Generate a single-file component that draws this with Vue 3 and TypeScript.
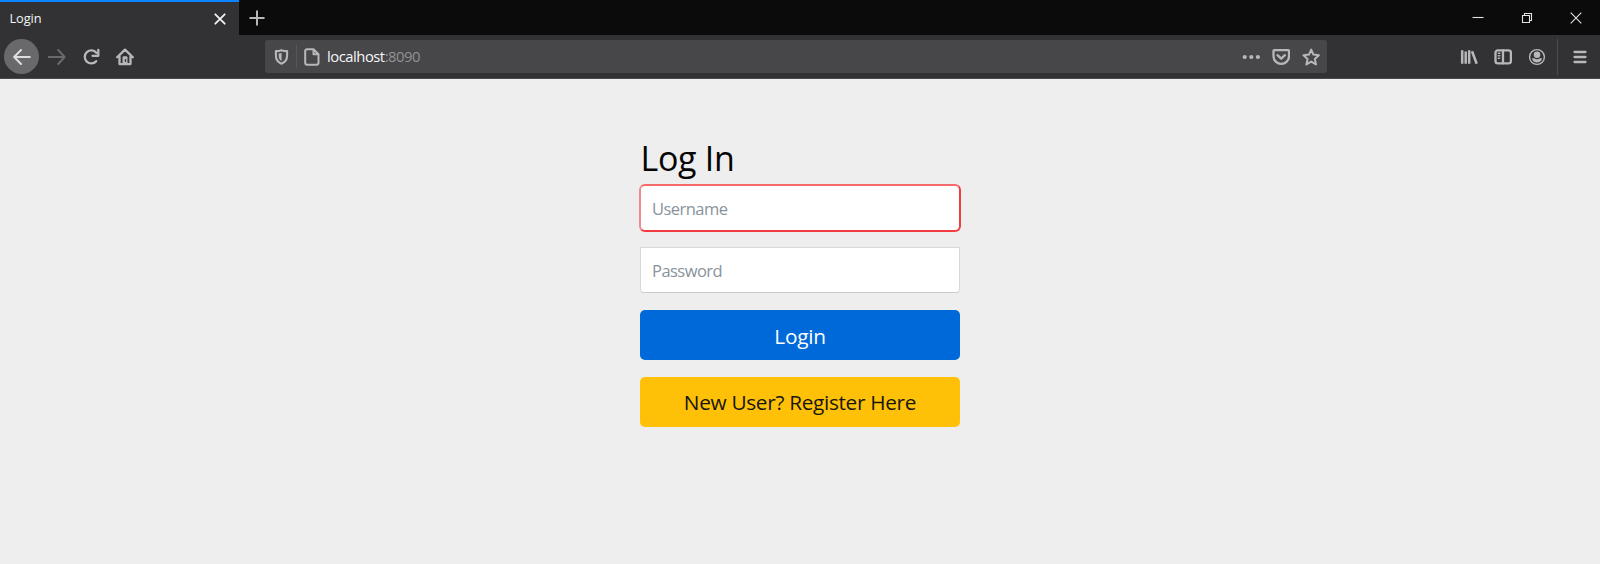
<script setup lang="ts">
import { ref } from 'vue'

const username = ref('')
const password = ref('')
const host = 'localhost'
const port = ':8090'
</script>

<template>
  <div class="window">
    <header class="tabstrip">
      <div class="tab">
        <span class="tab-title">Login</span>
        <svg class="tab-close" width="12" height="12" viewBox="0 0 12 12"><path d="M1.3 1.3 10.7 10.7M10.7 1.3 1.3 10.7" /></svg>
      </div>
      <svg class="new-tab" width="16" height="16" viewBox="0 0 16 16"><path d="M8 1.2v13.6M1.2 8h13.6" /></svg>
      <div class="controls">
        <svg width="12" height="12" viewBox="0 0 12 12"><path d="M.5 5.5h11" /></svg>
        <svg width="12" height="12" viewBox="0 0 12 12"><path d="M1.5 3.5h7v7h-7zM3.5 3.5v-2h7v7h-2" /></svg>
        <svg width="12" height="12" viewBox="0 0 12 12"><path d="M.7.7 11.3 11.3M11.3.7.7 11.3" /></svg>
      </div>
    </header>

    <nav class="toolbar">
      <div class="nav-buttons">
        <span class="back">
          <svg width="18" height="18" viewBox="0 0 18 18"><path d="M16.8 9H1.5M8 2 1.2 9 8 16" /></svg>
        </span>
        <svg class="forward" width="18" height="18" viewBox="0 0 18 18"><path d="M.8 9h15.4M10.2 2l6.4 7-6.4 7" /></svg>
        <svg class="heavy" width="18" height="18" viewBox="0 0 18 18"><path d="M14.3 4.8A6.5 6.5 0 1 0 14.2 13.2" /><path d="M16.3 2v5.8H10.5" /></svg>
        <svg class="heavy" width="18" height="18" viewBox="0 0 18 18"><path d="M1.2 9.3 9 1.6l7.8 7.7M3.5 8.6v7.5h11V8.6" /><path class="solid" d="M6.5 9.5q0-1.2 1.2-1.2h2.6q1.2 0 1.2 1.2V16h-5z" /><path class="knob" d="M9.5 11.6v1.6" /></svg>
      </div>

      <div class="urlbar">
        <svg class="shield" width="15" height="16" viewBox="0 0 15 16"><path d="M7.5 1.2c2 .7 3.7.9 5.6.9v4.4c0 4-1.7 6.7-5.6 8.2-3.9-1.5-5.6-4.2-5.6-8.2V2.1c1.9 0 3.6-.2 5.6-.9z" /><path class="solid" d="M7.6 4v8.1C5.8 11.2 4.7 9.7 4.7 6.5V4.4c1 0 2-.1 2.9-.4z" /></svg>
        <i class="url-divider"></i>
        <svg class="page" width="16" height="18" viewBox="0 0 16 18"><path d="M3.2 1.2h6.3l5 5V14.8c0 1.2-.8 2-2 2H3.2c-1.2 0-2-.8-2-2V3.2c0-1.2.8-2 2-2zM9.5 1.5v4.7h4.7" /></svg>
        <span class="address">{{ host }}<span class="port">{{ port }}</span></span>
        <div class="url-actions">
          <svg width="18" height="18" viewBox="0 0 18 18"><g class="dots"><circle cx="2.7" cy="9" r="2.1" /><circle cx="9.3" cy="9" r="2.1" /><circle cx="15.9" cy="9" r="2.1" /></g></svg>
          <svg class="heavy" width="18" height="18" viewBox="0 0 18 18"><path d="M2.5 2.1h13.5c.6 0 1 .4 1 1v5.1a7.7 7.7 0 0 1-15.5 0V3.1c0-.6.4-1 1-1z" /><path d="m5.5 7.2 3.7 3.5 3.7-3.5" /></svg>
          <svg width="18" height="18" viewBox="0 0 18 18"><path d="m9.2 1.6 2.2 5 5.5.6-4.1 3.7 1.2 5.5-4.8-2.8-4.8 2.8 1.2-5.5-4.1-3.7 5.5-.6z" /></svg>
        </div>
      </div>

      <div class="tools">
        <svg class="library" width="18" height="18" viewBox="0 0 18 18"><path d="M2.2 2.2V15.8M5.7 3.6V15.8M9.2 2.2V15.8M12 3.2 16.7 15.8" /></svg>
        <svg class="heavy" width="18" height="18" viewBox="0 0 18 18"><rect x="1.5" y="2.3" width="15.4" height="13" rx="2.4" /><path d="M9 2.3v13" /><path class="thin" d="M4.3 5.3h1.6M4.3 7.8h1.6M4.3 10.2h1.3" /></svg>
        <svg width="18" height="18" viewBox="0 0 18 18"><circle class="ring" cx="9" cy="9" r="7.4" /><circle class="solid" cx="9" cy="6.7" r="3.3" /><path class="solid" d="M3.9 10.3h2.5C7.3 11.6 10.7 11.6 11.6 10.3h2.5C13.3 13.4 11.5 14.6 9 14.6s-4.3-1.2-5.1-4.3z" /></svg>
        <i class="tool-divider"></i>
        <svg class="heavy" width="14" height="18" viewBox="0 0 14 18"><path d="M1.5 4h11M1.5 9h11M1.5 14h11" /></svg>
      </div>
    </nav>

    <main class="content">
      <form class="login" @submit.prevent>
        <h1>Log In</h1>
        <input v-model="username" class="field invalid" type="text" placeholder="Username" />
        <input v-model="password" class="field password" type="password" placeholder="Password" />
        <button class="button primary" type="submit"><span>Login</span></button>
        <button class="button register" type="button"><span>New User? Register Here</span></button>
      </form>
    </main>
  </div>
</template>

<style>
html,
body {
  margin: 0;
  background: #eee;
}
</style>

<style scoped>
* {
  box-sizing: border-box;
}
.window {
  width: 1600px;
  height: 564px;
  overflow: hidden;
  background: #eee;
  font-family: "Open Sans", "Noto Sans", sans-serif;
}
svg {
  display: block;
  flex: none;
  fill: none;
  stroke: #b8b8ba;
  stroke-width: 2;
  stroke-linejoin: round;
  stroke-linecap: round;
}
.heavy {
  stroke-width: 2.3;
}
.tabstrip {
  display: flex;
  align-items: center;
  height: 35px;
  background: #0b0b0b;
}
.tab {
  display: flex;
  align-items: center;
  justify-content: space-between;
  width: 239px;
  height: 35px;
  padding: 0 13px 0 9.5px;
  border-top: 2px solid #0a84ff;
  background: #323234;
}
.tab-title {
  padding-bottom: 2px;
  color: #f4f4f5;
  font-size: 12.8px;
  letter-spacing: -0.1px;
}
.tab-close {
  stroke: #f2f2f2;
  stroke-width: 1.8;
}
.new-tab {
  margin-left: 10px;
}
.controls {
  display: flex;
  gap: 37px;
  margin-left: auto;
  margin-right: 18px;
}
.controls svg {
  stroke: #e2e2e2;
  stroke-width: 1.1;
  stroke-linecap: butt;
  stroke-linejoin: miter;
}
.toolbar {
  display: flex;
  align-items: center;
  height: 44px;
  padding-left: 4px;
  border-bottom: 1px solid #4a4a4c;
  background: #323234;
}
.nav-buttons {
  display: flex;
  align-items: center;
  gap: 16px;
  width: 261px;
}
.back {
  display: flex;
  align-items: center;
  justify-content: center;
  width: 35px;
  height: 35px;
  margin-right: -7px;
  border-radius: 50%;
  background: #69696b;
}
.back svg {
  stroke: #dedede;
}
.forward {
  stroke: #69696b;
}
.solid {
  fill: #b8b8ba;
  stroke: none;
}
.knob {
  stroke: #323234;
  stroke-width: 1.4;
}
.urlbar {
  display: flex;
  align-items: center;
  width: 1062px;
  height: 33px;
  padding-left: 9px;
  border-radius: 3px;
  background: #474749;
}
.shield {
  stroke-width: 2.1;
}
.url-divider {
  width: 1px;
  height: 23px;
  margin: 0 7px;
  background: #57575b;
}
.page {
  stroke-width: 2;
}
.address {
  margin-left: 7px;
  padding-bottom: 1px;
  color: #f6f6f7;
  font-size: 14.8px;
  letter-spacing: -0.48px;
  white-space: nowrap;
}
.port {
  color: #929294;
}
.url-actions {
  display: flex;
  gap: 12px;
  margin-left: auto;
  margin-right: 7px;
}
.dots {
  fill: #b8b8ba;
  stroke: none;
}
.tools {
  display: flex;
  align-items: center;
  gap: 16px;
  margin-left: auto;
  margin-right: 13px;
}
.library {
  stroke-width: 2.5;
  stroke-linecap: butt;
}
.tools .thin,
.tools .ring {
  stroke-width: 1.4;
}
.tool-divider {
  width: 1px;
  height: 36px;
  margin: 0 -1px 0 -5px;
  background: #4c4c4e;
}
.content {
  display: flex;
  justify-content: center;
  padding-top: 57px;
}
.login {
  display: flex;
  flex-direction: column;
  align-items: center;
  width: 322px;
}
h1 {
  align-self: stretch;
  height: 44px;
  margin: 0 0 4px;
  padding-left: 1.5px;
  color: #050505;
  font-size: 34px;
  font-weight: 400;
  line-height: 45px;
  letter-spacing: -0.3px;
}
.field {
  display: block;
  border: 1px solid #d8d8d8;
  border-bottom-color: #c8cccc;
  border-radius: 1px 1px 4px 4px;
  outline: none;
  background: #fff;
  color: #212529;
  font-family: inherit;
  font-size: 16.5px;
  letter-spacing: -0.53px;
}
.field::placeholder {
  color: #89939b;
  opacity: 1;
}
.invalid {
  width: 322px;
  height: 48px;
  padding: 0 11px;
  border: 2px solid;
  border-color: #f56a6b #f43c40 #f43c40 #f08b8c;
  border-radius: 6px;
}
.password {
  width: 320px;
  height: 46px;
  margin-top: 15px;
  padding: 0 11px;
}
.button {
  width: 320px;
  height: 50px;
  padding: 2px 0 0;
  border: 0;
  border-radius: 5px;
  font-family: inherit;
  font-size: 20.8px;
  letter-spacing: -0.25px;
}
.primary {
  margin-top: 17px;
  background: #0069d9;
  color: #fff;
}
.register {
  margin-top: 17px;
  padding-top: 0;
  letter-spacing: -0.32px;
  background: #ffc107;
  color: #17160f;
}
</style>
